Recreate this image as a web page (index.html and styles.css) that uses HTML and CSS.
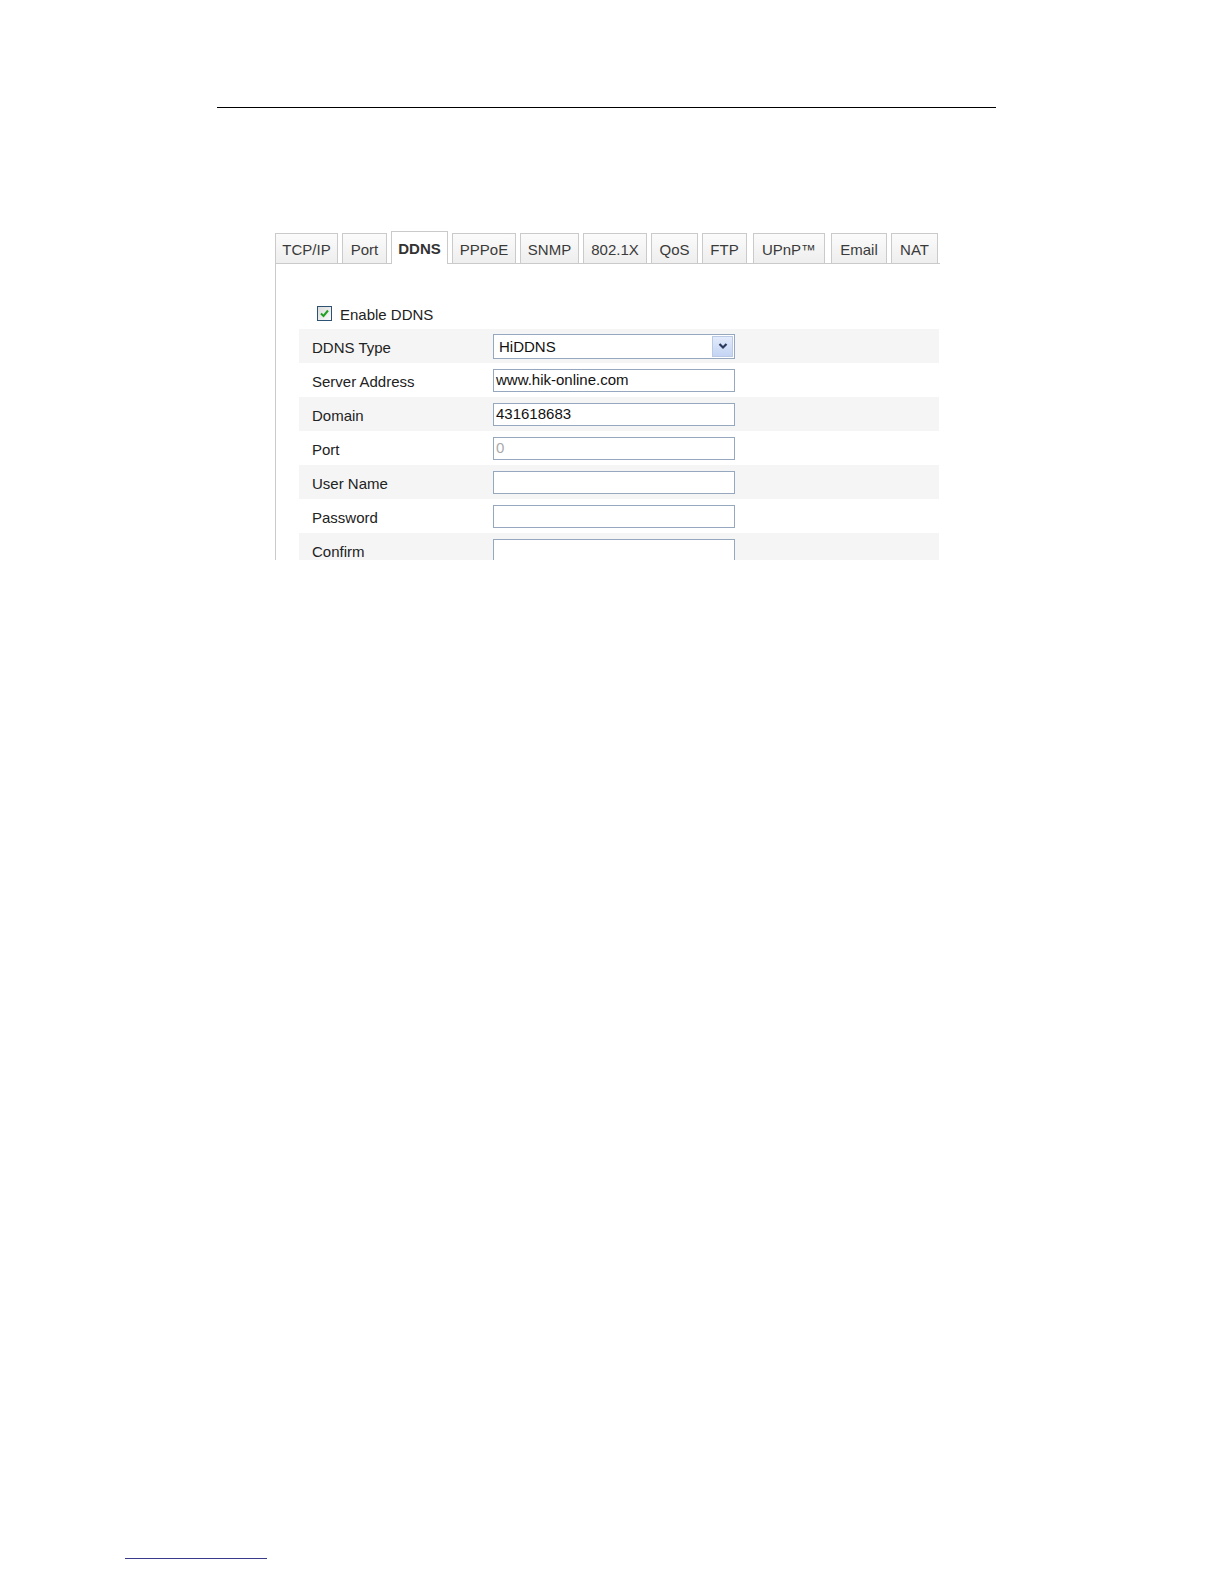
FILE: index.html
```html
<!DOCTYPE html>
<html>
<head>
<meta charset="utf-8">
<link rel="stylesheet" href="styles.css">
</head>
<body>
<div class="page">
  <div class="toprule"></div>
  <div class="shot">
    <div class="tabs">
      <div class="tab w-tcp">TCP/IP</div>
      <div class="tab w-port">Port</div>
      <div class="tab active w-ddns">DDNS</div>
      <div class="tab w-pppoe">PPPoE</div>
      <div class="tab w-snmp">SNMP</div>
      <div class="tab w-8021x">802.1X</div>
      <div class="tab w-qos">QoS</div>
      <div class="tab w-ftp">FTP</div>
      <div class="tab w-upnp">UPnP™</div>
      <div class="tab w-email">Email</div>
      <div class="tab w-nat">NAT</div>
    </div>
    <div class="panel">
      <div class="enable">
        <span class="cbox">
          <svg width="11" height="11" viewBox="0 0 11 11"><path d="M2 5.5 L4.5 8 L9 2.5" fill="none" stroke="#21a121" stroke-width="2"/></svg>
        </span>
        <span class="enable-label">Enable DDNS</span>
      </div>
      <div class="rows">
        <div class="row gray">
          <div class="label">DDNS Type</div>
          <div class="select">
            <span class="sel-text">HiDDNS</span>
            <span class="sel-btn"><svg width="10" height="8" viewBox="0 0 10 8"><path d="M1.5 2 L5 5.5 L8.5 2" fill="none" stroke="#2b3a5c" stroke-width="2.2"/></svg></span>
          </div>
        </div>
        <div class="row">
          <div class="label">Server Address</div>
          <div class="input">www.hik-online.com</div>
        </div>
        <div class="row gray">
          <div class="label">Domain</div>
          <div class="input">431618683</div>
        </div>
        <div class="row">
          <div class="label">Port</div>
          <div class="input disabled">0</div>
        </div>
        <div class="row gray">
          <div class="label">User Name</div>
          <div class="input"></div>
        </div>
        <div class="row">
          <div class="label">Password</div>
          <div class="input"></div>
        </div>
        <div class="row gray">
          <div class="label">Confirm</div>
          <div class="input"></div>
        </div>
      </div>
    </div>
  </div>
  <div class="footrule"></div>
</div>
</body>
</html>
```

FILE: styles.css
```css
html, body {
  margin: 0;
  padding: 0;
  background: #fff;
}
.page {
  box-sizing: border-box;
  width: 1224px;
  height: 1584px;
  padding-top: 107px;
  position: relative;
  overflow: hidden;
  font-family: "Liberation Sans", Arial, sans-serif;
  color: #222;
}
.toprule {
  margin-left: 217px;
  width: 779px;
  height: 0;
  border-top: 1px solid #000;
}
.shot {
  margin-left: 275px;
  padding-top: 123px;
  width: 665px;
}
.tabs {
  display: flex;
  align-items: flex-end;
  height: 32px;
  position: relative;
  z-index: 2;
}
.tab {
  box-sizing: border-box;
  height: 30px;
  border: 1px solid #cacaca;
  border-bottom: none;
  background: linear-gradient(#fbfbfb, #eeeeee);
  font-size: 15px;
  color: #3a3a3a;
  display: flex;
  align-items: center;
  justify-content: center;
  margin-right: 4px;
  padding-top: 1px;
}
.tab.active {
  height: 33px;
  background: #fff;
  font-weight: bold;
  color: #333;
  margin-bottom: -1px;
  padding-top: 0;
}
.w-tcp { width: 63px; }
.w-port { width: 45px; }
.w-ddns { width: 57px; }
.w-pppoe { width: 64px; }
.w-snmp { width: 59px; }
.w-8021x { width: 64px; }
.w-qos { width: 47px; }
.w-ftp { width: 45px; margin-right: 6px; }
.w-upnp { width: 72px; margin-right: 6px; }
.w-email { width: 56px; }
.w-nat { width: 47px; margin-right: 0; }
.panel {
  box-sizing: border-box;
  height: 297px;
  border-top: 1px solid #cacaca;
  border-left: 1px solid #cacaca;
  padding-left: 23px;
  overflow: hidden;
}
.enable {
  display: flex;
  align-items: center;
  height: 22px;
  margin-top: 38px;
  margin-left: 18px;
  margin-bottom: 5px;
}
.cbox {
  box-sizing: border-box;
  width: 15px;
  height: 15px;
  border: 1px solid #2e5272;
  background: linear-gradient(135deg, #dcdcdc, #fafafa);
  display: flex;
  align-items: center;
  justify-content: center;
  margin-right: 8px;
}
.enable-label {
  font-size: 15px;
  color: #222;
  position: relative;
  top: 1px;
}
.rows {
  width: 640px;
}
.row {
  height: 34px;
  display: flex;
  align-items: center;
}
.row.gray {
  background: #f5f5f5;
}
.label {
  width: 181px;
  padding-left: 13px;
  font-size: 15px;
  color: #222;
  position: relative;
  top: 1px;
}
.input {
  box-sizing: border-box;
  width: 242px;
  height: 23px;
  border: 1px solid #96a8bf;
  background: #fff;
  font-size: 15px;
  color: #111;
  padding-left: 2px;
  line-height: 20px;
}
.input.disabled {
  color: #aaa;
}
.select {
  box-sizing: border-box;
  width: 242px;
  height: 25px;
  border: 1px solid #96a8bf;
  background: #fff;
  display: flex;
  align-items: center;
  justify-content: space-between;
  font-size: 15px;
  color: #111;
  padding-left: 5px;
  padding-right: 1px;
}
.sel-btn {
  box-sizing: border-box;
  width: 21px;
  height: 21px;
  border: 1px solid #b9c9e6;
  background: linear-gradient(#e3ebfb, #c4d4f3);
  display: flex;
  align-items: center;
  justify-content: center;
}
.footrule {
  position: absolute;
  left: 125px;
  top: 1558px;
  width: 142px;
  height: 0;
  border-top: 1px solid #3a3a8a;
}
```
